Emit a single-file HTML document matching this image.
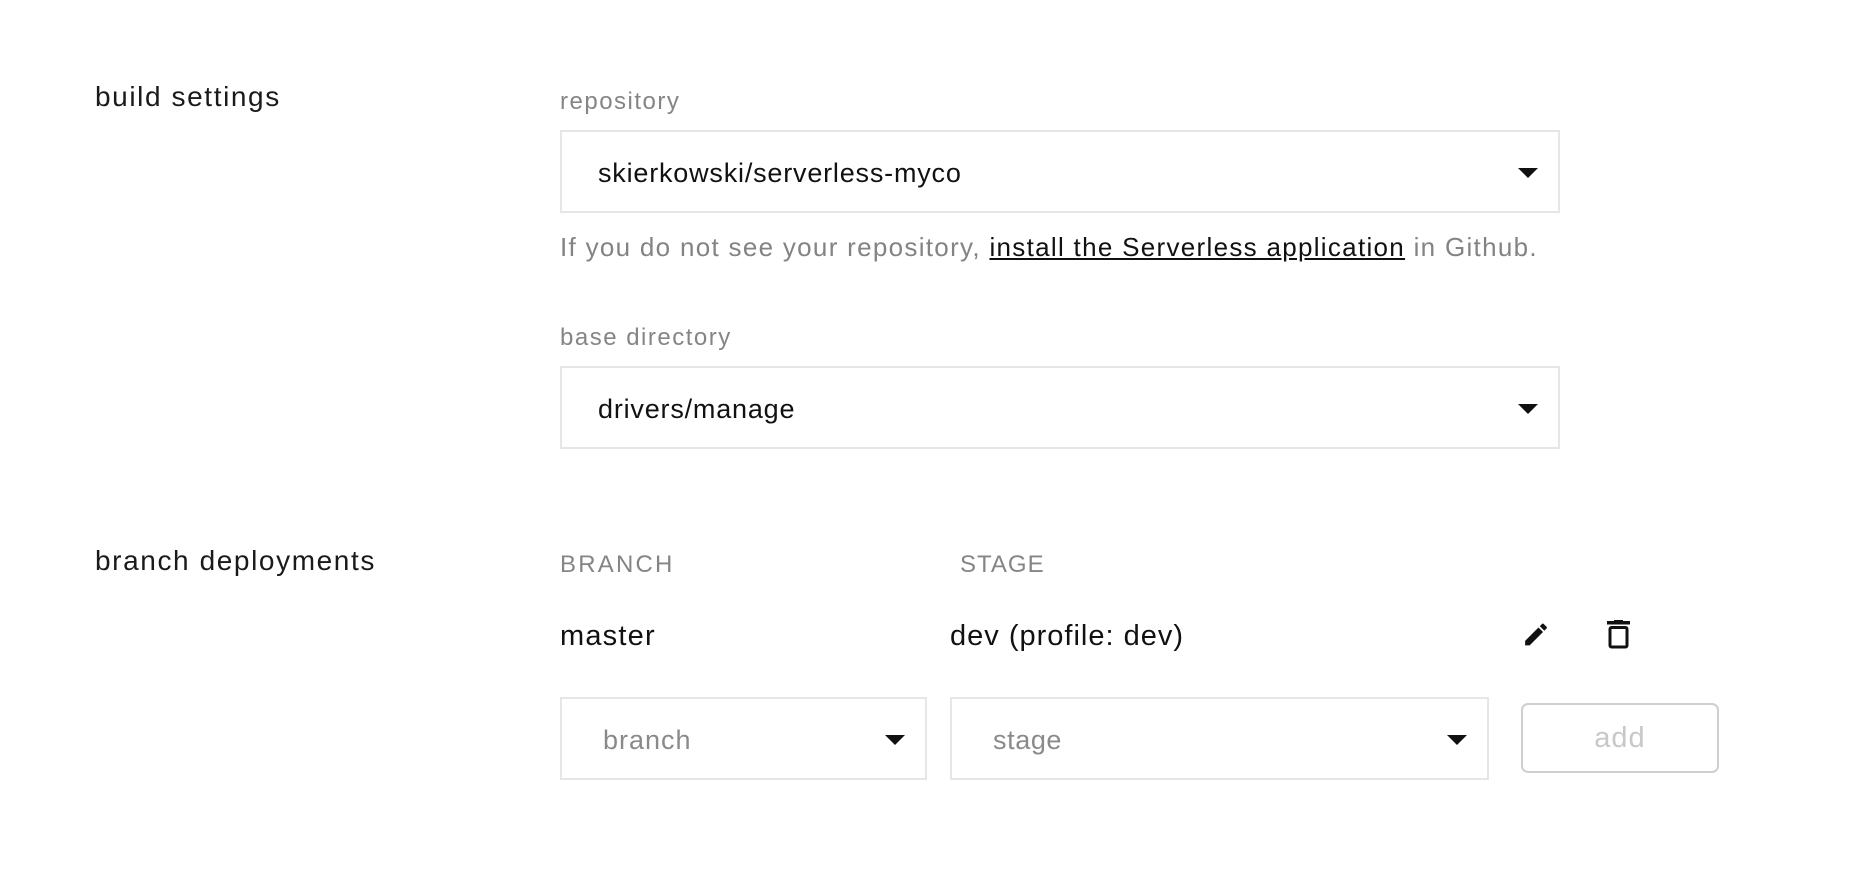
<!DOCTYPE html>
<html><head><meta charset="utf-8"><style>
*{margin:0;padding:0;box-sizing:border-box}
body{width:1858px;height:886px;background:#fff;font-family:"Liberation Sans",sans-serif;position:relative;overflow:hidden;color:#111}
.a{position:absolute;white-space:nowrap}
.h{font-size:28px;color:#1a1a1a;letter-spacing:1.6px}
.lbl{font-size:24px;color:#858585;letter-spacing:1.5px}
.box{position:absolute;border:2px solid #e6e6e6;background:#fff}
.box span{position:absolute;top:50%;transform:translateY(-45%);font-size:27px}
.arr{position:absolute;width:0;height:0;border-left:10px solid transparent;border-right:10px solid transparent;border-top:10px solid #111;top:50%;margin-top:-4px}
</style></head><body>
<div class="a h" style="left:95px;top:81px">build settings</div>
<div class="a lbl" style="left:560px;top:88px">repository</div>
<div class="box" style="left:560px;top:130px;width:1000px;height:83px"><span style="left:36px;color:#111;letter-spacing:0.8px">skierkowski/serverless-myco</span><div class="arr" style="right:20px"></div></div>
<div class="a" style="left:560px;top:232px;font-size:26px;color:#838383;letter-spacing:1.3px">If you do not see your repository, <span style="color:#111;text-decoration:underline">install the Serverless application</span> in Github.</div>
<div class="a lbl" style="left:560px;top:324px">base directory</div>
<div class="box" style="left:560px;top:366px;width:1000px;height:83px"><span style="left:36px;color:#111;letter-spacing:0.8px">drivers/manage</span><div class="arr" style="right:20px"></div></div>
<div class="a h" style="left:95px;top:545px">branch deployments</div>
<div class="a lbl" style="left:560px;top:551px;letter-spacing:2.2px">BRANCH</div>
<div class="a lbl" style="left:960px;top:551px;letter-spacing:1px">STAGE</div>
<div class="a" style="left:560px;top:620px;font-size:29px;letter-spacing:1.2px">master</div>
<div class="a" style="left:950px;top:620px;font-size:29px;letter-spacing:1px">dev (profile: dev)</div>
<svg class="a" style="left:1521px;top:620px" width="30" height="29" viewBox="0 0 24 24"><path d="M3 17.25V21h3.75L17.81 9.94l-3.75-3.75L3 17.25zM20.71 7.04a1 1 0 000-1.41l-2.34-2.34a1 1 0 00-1.41 0l-1.83 1.83 3.75 3.75 1.83-1.83z" fill="#111"/></svg>
<svg class="a" style="left:1606px;top:620px" width="25" height="29" viewBox="0 0 25 29"><rect x="1" y="1" width="23" height="3.5" fill="#111"/><rect x="8" y="0" width="9" height="2" fill="#111"/><rect x="4" y="7.5" width="17" height="19.5" rx="1.5" fill="none" stroke="#111" stroke-width="3"/></svg>
<div class="box" style="left:560px;top:697px;width:367px;height:83px"><span style="left:41px;color:#8a8a8a;letter-spacing:1px">branch</span><div class="arr" style="right:20px"></div></div>
<div class="box" style="left:950px;top:697px;width:539px;height:83px"><span style="left:41px;color:#8a8a8a;letter-spacing:0.6px">stage</span><div class="arr" style="right:20px"></div></div>
<div class="a" style="left:1521px;top:703px;width:198px;height:70px;border:2px solid #cfcfcf;border-radius:7px;color:#c8c8c8;font-size:29px;text-align:center;line-height:66px;letter-spacing:1px">add</div>
</body></html>
